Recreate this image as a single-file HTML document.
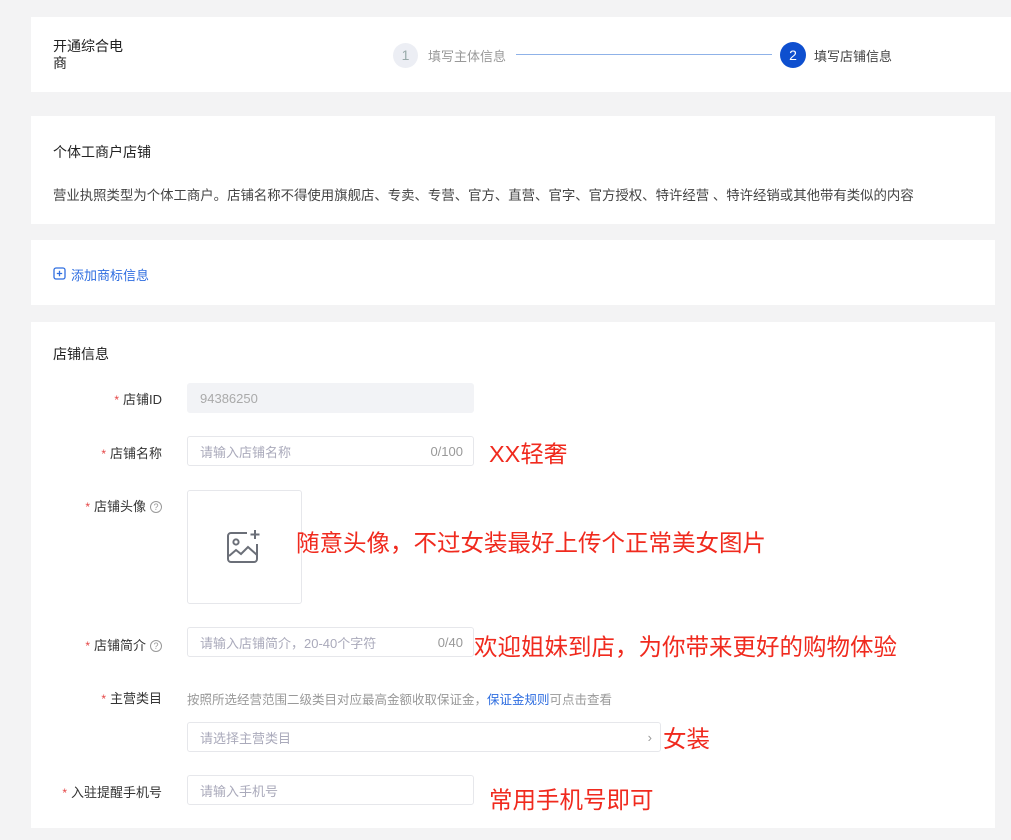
<!DOCTYPE html>
<html><head><meta charset="utf-8"><style>
*{margin:0;padding:0;box-sizing:border-box}
body{width:1011px;height:840px;background:#f3f3f4;font-family:"Liberation Sans","Noto Sans CJK SC",sans-serif;position:relative;overflow:hidden;color:#333}
.card{position:absolute;background:#fff}
.a{position:absolute;white-space:nowrap}
.lbl{position:absolute;right:849px;font-size:13px;color:#333;white-space:nowrap}
.lbl b{color:#e54545;font-weight:normal;margin-right:4px;font-size:12px}
.inp{position:absolute;border:1px solid #e6e7eb;border-radius:3px;background:#fff;font-size:13px;color:#aab;padding-left:12px;display:flex;align-items:center}
.red{position:absolute;color:#f02a1e;font-size:23.5px;white-space:nowrap;font-family:"Liberation Sans","Noto Sans CJK SC",sans-serif}
.q{display:inline-block;width:12px;height:12px;border:1px solid #999;border-radius:50%;font-size:9px;line-height:10px;text-align:center;color:#999;margin-left:4px;vertical-align:1px}
</style></head><body>
<div class="card" style="left:31px;top:17px;width:980px;height:75px"></div>
<div class="a" style="left:53px;top:38px;font-size:14px;line-height:17px;color:#222">开通综合电<br>商</div>
<div class="a" style="left:393px;top:43px;width:25px;height:25px;border-radius:50%;background:#eceef4;color:#9aa;font-size:14px;text-align:center;line-height:25px">1</div>
<div class="a" style="left:428px;top:46px;font-size:13px;color:#999">填写主体信息</div>
<div class="a" style="left:516px;top:54px;width:256px;height:1px;background:#8fb2e8"></div>
<div class="a" style="left:780px;top:42px;width:26px;height:26px;border-radius:50%;background:#0e4fcf;color:#fff;font-size:14px;text-align:center;line-height:26px">2</div>
<div class="a" style="left:814px;top:46px;font-size:13px;color:#444">填写店铺信息</div>

<div class="card" style="left:31px;top:116px;width:964px;height:108px"></div>
<div class="a" style="left:53px;top:142px;font-size:14px;color:#222">个体工商户店铺</div>
<div class="a" style="left:53px;top:184px;font-size:13.4px;color:#444">营业执照类型为个体工商户。店铺名称不得使用旗舰店、专卖、专营、官方、直营、官字、官方授权、特许经营 、特许经销或其他带有类似的内容</div>

<div class="card" style="left:31px;top:240px;width:964px;height:65px"></div>
<svg class="a" style="left:53px;top:267px" width="13" height="13" viewBox="0 0 13 13"><rect x="1" y="1" width="11" height="11" rx="2" fill="none" stroke="#2f6ee0" stroke-width="1.3"/><path d="M6.5 3.8v5.4M3.8 6.5h5.4" stroke="#2f6ee0" stroke-width="1.3"/></svg>
<div class="a" style="left:71px;top:265px;font-size:13px;color:#2f6ee0">添加商标信息</div>

<div class="card" style="left:31px;top:322px;width:964px;height:506px"></div>
<div class="a" style="left:53px;top:344px;font-size:14px;color:#222">店铺信息</div>

<div class="lbl" style="top:389px"><b>*</b>店铺ID</div>
<div class="inp" style="left:187px;top:383px;width:287px;height:30px;background:#f2f3f6;border-color:#f2f3f6;color:#aaa">94386250</div>

<div class="lbl" style="top:443px"><b>*</b>店铺名称</div>
<div class="inp" style="left:187px;top:436px;width:287px;height:30px">请输入店铺名称<span style="position:absolute;right:10px;color:#999">0/100</span></div>
<div class="red" style="left:489px;top:435px">XX轻奢</div>

<div class="lbl" style="top:496px"><b>*</b>店铺头像<span class="q">?</span></div>
<div class="inp" style="left:187px;top:490px;width:115px;height:114px;padding:0"></div>
<svg class="a" style="left:225px;top:529px" width="38" height="36" viewBox="0 0 38 36"><path d="M22 4H6a3 3 0 0 0-3 3v23a3 3 0 0 0 3 3h23a3 3 0 0 0 3-3V15" fill="none" stroke="#6b6f78" stroke-width="2"/><circle cx="11" cy="13" r="2.6" fill="none" stroke="#6b6f78" stroke-width="2"/><path d="M4 27l7-6 5 4 7-7 9 8" fill="none" stroke="#6b6f78" stroke-width="2"/><path d="M30 1v9M25.5 5.5h9" stroke="#6b6f78" stroke-width="2"/></svg>
<div class="red" style="left:296px;top:524px">随意头像，不过女装最好上传个正常美女图片</div>

<div class="lbl" style="top:635px"><b>*</b>店铺简介<span class="q">?</span></div>
<div class="inp" style="left:187px;top:627px;width:287px;height:30px">请输入店铺简介，20-40个字符<span style="position:absolute;right:10px;color:#999">0/40</span></div>
<div class="red" style="left:474px;top:628px">欢迎姐妹到店，为你带来更好的购物体验</div>

<div class="lbl" style="top:688px"><b>*</b>主营类目</div>
<div class="a" style="left:187px;top:689px;font-size:12.5px;color:#999">按照所选经营范围二级类目对应最高金额收取保证金，<span style="color:#2f6ee0">保证金规则</span>可点击查看</div>
<div class="inp" style="left:187px;top:722px;width:474px;height:30px">请选择主营类目<span style="position:absolute;right:8px;color:#999">›</span></div>
<div class="red" style="left:663px;top:720px">女装</div>

<div class="lbl" style="top:782px"><b>*</b>入驻提醒手机号</div>
<div class="inp" style="left:187px;top:775px;width:287px;height:30px">请输入手机号</div>
<div class="red" style="left:489px;top:781px">常用手机号即可</div>
</body></html>
